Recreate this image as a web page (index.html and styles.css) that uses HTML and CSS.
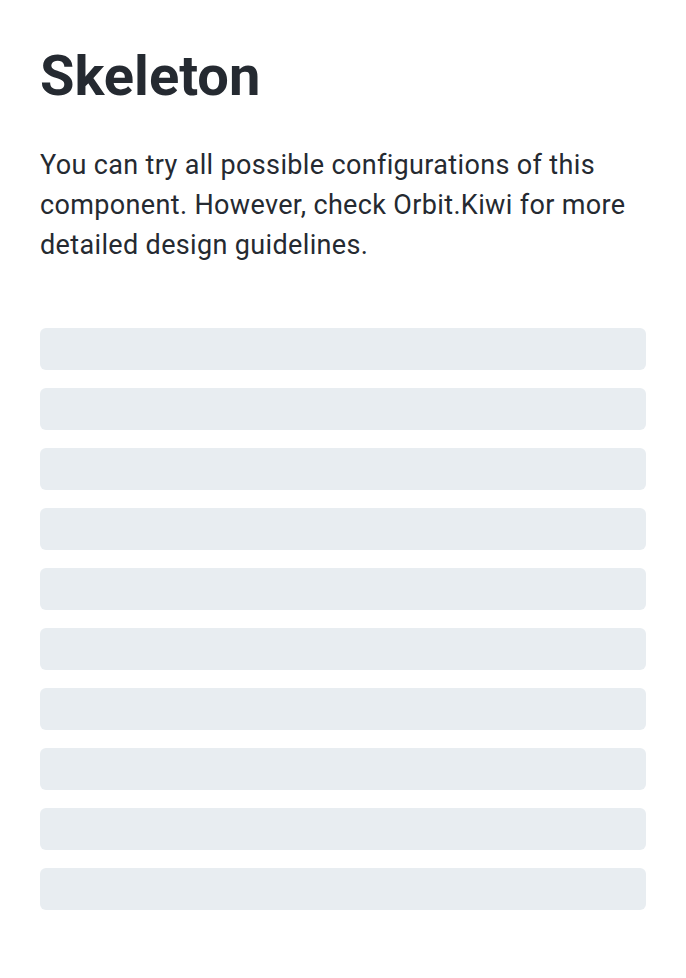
FILE: index.html
```html
<!DOCTYPE html>
<html>
<head>
<meta charset="utf-8">
<link rel="stylesheet" href="styles.css">
</head>
<body>
<main class="page">
  <h1 class="title">Skeleton</h1>
  <p class="intro">You can try all possible configurations of this component. However, check Orbit.Kiwi for more detailed design guidelines.</p>
  <div class="skeleton">
    <div class="bar"></div>
    <div class="bar"></div>
    <div class="bar"></div>
    <div class="bar"></div>
    <div class="bar"></div>
    <div class="bar"></div>
    <div class="bar"></div>
    <div class="bar"></div>
    <div class="bar"></div>
    <div class="bar"></div>
  </div>
</main>
</body>
</html>
```
FILE: styles.css
```css
html, body {
  margin: 0;
  padding: 0;
  background: #ffffff;
}
.page {
  padding: 40px 40px;
  font-family: Roboto, "Liberation Sans", sans-serif;
  color: #252a31;
}
.title {
  margin: 0;
  font-size: 56px;
  font-weight: 700;
  line-height: 72px;
}
.intro {
  margin: 33px 0 0 0;
  font-size: 27px;
  line-height: 40px;
  letter-spacing: 0.35px;
}
.skeleton {
  margin-top: 63px;
  display: flex;
  flex-direction: column;
  gap: 18px;
}
.bar {
  height: 42px;
  border-radius: 6px;
  background: #e8edf1;
}
```
